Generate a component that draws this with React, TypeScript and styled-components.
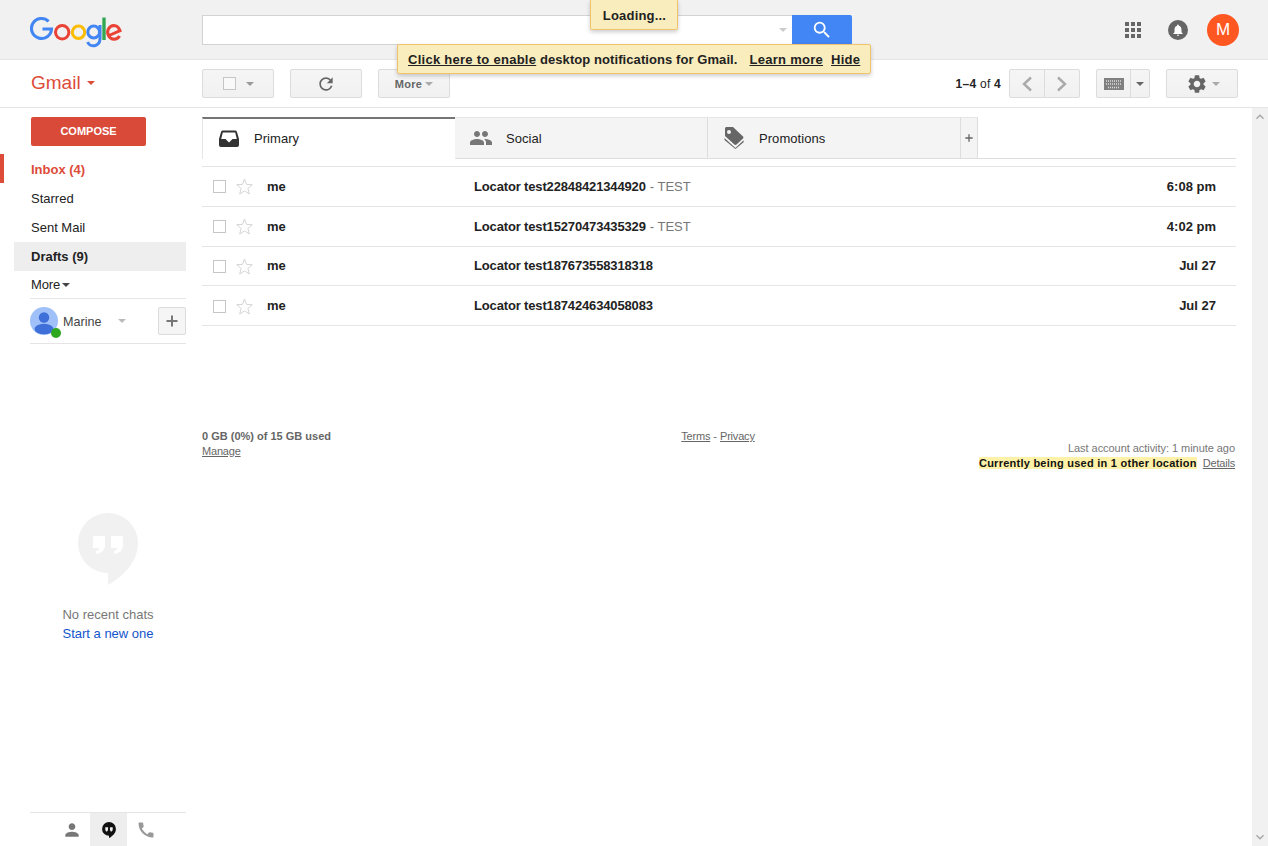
import styled, { createGlobalStyle } from 'styled-components';
import { MdApps, MdCall, MdKeyboardArrowDown, MdKeyboardArrowUp, MdNotifications, MdPeople, MdPerson, MdRefresh, MdSearch, MdSettings } from 'react-icons/md';

const Global = createGlobalStyle`
  html, body { margin: 0; padding: 0; height: 100%; overflow: hidden; background: #fff; }
  body { font-family: "Liberation Sans", Arial, sans-serif; font-size: 13px; color: #222; }
  * { box-sizing: border-box; }
`;

const Page = styled.div`
  position: relative;
  display: flex;
  flex-direction: column;
  width: 1268px;
  height: 846px;
  overflow: hidden;
`;

const Header = styled.header`
  display: flex;
  align-items: center;
  height: 60px;
  background: #f1f1f1;
  border-bottom: 1px solid #e5e5e5;
`;

const LogoBox = styled.div`
  display: flex;
  width: 202px;
  padding: 3px 0 0 30px;
`;

const SearchBox = styled.div`
  display: flex;
  justify-content: flex-end;
  align-items: center;
  width: 590px;
  height: 30px;
  padding-right: 5px;
  background: #fff;
  border: 1px solid #d3d3d3;
  border-right: 0;
`;

const SearchButton = styled.div`
  display: flex;
  align-items: center;
  justify-content: center;
  width: 60px;
  height: 30px;
  background: #4285f4;
  border-radius: 0 2px 2px 0;
  color: #fff;
  font-size: 22px;
`;

const Caret = styled.span<{ $color?: string; $size?: number }>`
  display: inline-block;
  width: 0;
  height: 0;
  border-style: solid;
  border-width: ${p => p.$size ?? 4}px ${p => p.$size ?? 4}px 0;
  border-color: ${p => p.$color ?? '#888'} transparent transparent;
`;

const HeaderRight = styled.div`
  display: flex;
  align-items: center;
  margin-left: auto;
  padding-right: 29px;
`;

const AppsSlot = styled.div`
  display: flex;
  color: #666;
  font-size: 24px;
  margin-right: 23px;
`;

const BellCircle = styled.div`
  display: flex;
  align-items: center;
  justify-content: center;
  width: 20px;
  height: 20px;
  margin-right: 19px;
  border-radius: 50%;
  background: #666;
  color: #fff;
  font-size: 14px;
`;

const Avatar = styled.div`
  display: flex;
  align-items: center;
  justify-content: center;
  width: 32px;
  height: 32px;
  border-radius: 50%;
  background: #ff5722;
  color: #fff;
  font-size: 17px;
`;

const Toolbar = styled.div`
  display: flex;
  align-items: center;
  height: 48px;
  border-bottom: 1px solid #e5e5e5;
  padding-right: 30px;
`;

const GmailLabel = styled.div`
  display: flex;
  align-items: center;
  gap: 6px;
  width: 202px;
  padding: 0 0 1px 31px;
  font-size: 19px;
  color: #dd4b39;
`;

const ToolGroup = styled.div`
  display: flex;
  gap: 16px;
`;

const ToolButton = styled.div<{ $icon?: boolean }>`
  display: flex;
  align-items: center;
  justify-content: center;
  gap: 3px;
  width: 72px;
  height: 29px;
  background: linear-gradient(#f5f5f5, #f1f1f1);
  border: 1px solid #dcdcdc;
  border-radius: 2px;
  color: #666;
  font-size: ${p => (p.$icon ? '20px' : '11px')};
  font-weight: bold;
  letter-spacing: 0.3px;
`;

const BoxMark = styled.span`
  width: 13px;
  height: 13px;
  margin-right: 7px;
  background: #f9f9f9;
  border: 1px solid #c6c6c6;
`;

const ToolRight = styled.div`
  display: flex;
  align-items: center;
  margin-left: auto;
`;

const PageCount = styled.div`
  margin-right: 8px;
  font-size: 12px;
  letter-spacing: 0.25px;
  color: #222;
  b { font-weight: bold; }
`;

const SplitButton = styled.div<{ $mr?: number }>`
  display: flex;
  height: 29px;
  margin-right: ${p => p.$mr ?? 0}px;
  background: linear-gradient(#f5f5f5, #f1f1f1);
  border: 1px solid #dcdcdc;
  border-radius: 2px;
`;

const SplitCell = styled.div<{ $w: number; $divide?: boolean; $gear?: boolean }>`
  display: flex;
  align-items: center;
  justify-content: center;
  gap: 4px;
  width: ${p => p.$w}px;
  padding-left: ${p => (p.$gear ? '2px' : '0')};
  border-left: ${p => (p.$divide ? '1px solid #dcdcdc' : '0')};
  color: #666;
  font-size: ${p => (p.$gear ? '22px' : '13px')};
`;

const Body = styled.div`
  flex: 1;
  display: flex;
  min-height: 0;
`;

const Sidebar = styled.aside`
  display: flex;
  flex-direction: column;
  width: 186px;
  margin-right: 16px;
  padding-top: 9px;
`;

const Compose = styled.div`
  display: flex;
  align-items: center;
  justify-content: center;
  width: 115px;
  height: 29px;
  margin: 0 0 8px 31px;
  padding-bottom: 1px;
  background: #d94a38;
  border-radius: 2px;
  color: #fff;
  font-size: 11px;
  font-weight: bold;
`;

const NavItem = styled.div<{ $active?: boolean; $strong?: boolean; $shade?: boolean }>`
  position: relative;
  display: flex;
  align-items: center;
  height: 29.33px;
  margin-left: 14px;
  padding: ${p => (p.$active ? '2px' : '0.6px')} 0 0 17px;
  background: ${p => (p.$shade ? '#eee' : 'transparent')};
  color: ${p => (p.$active ? '#dd4b39' : '#222')};
  font-weight: ${p => (p.$strong ? 'bold' : 'normal')};
  font-size: 13px;

  &::before {
    content: '';
    display: ${p => (p.$active ? 'block' : 'none')};
    position: absolute;
    left: -14px;
    top: 0;
    bottom: 0;
    width: 4px;
    background: #dd4b39;
  }
`;

const MoreItem = styled.div`
  display: flex;
  align-items: center;
  gap: 2px;
  height: 27px;
  margin-left: 31px;
  font-size: 13px;
  letter-spacing: -0.1px;
`;

const AccountRow = styled.div`
  display: flex;
  align-items: center;
  height: 46px;
  margin-left: 30px;
  border-top: 1px solid #e5e5e5;
  border-bottom: 1px solid #e5e5e5;
`;

const AccountAvatar = styled.div`
  position: relative;
  display: flex;
  flex: none;
  width: 28px;
  height: 28px;
  margin-right: 5px;
`;

const OnlineDot = styled.span`
  position: absolute;
  right: -3px;
  bottom: -3px;
  width: 10px;
  height: 10px;
  border-radius: 50%;
  background: #2fa71f;
`;

const AccountName = styled.span`
  width: 55px;
  padding-top: 1px;
  color: #444;
  font-size: 12.6px;
`;

const AddButton = styled.div`
  display: flex;
  align-items: center;
  justify-content: center;
  width: 28px;
  height: 28px;
  margin-left: auto;
  background: #f5f5f5;
  border: 1px solid #dcdcdc;
  border-radius: 2px;
`;

const ChatEmpty = styled.div`
  display: flex;
  flex-direction: column;
  align-items: center;
  margin: 169px 0 0 30px;
  font-size: 13px;
  color: #777;
  line-height: 19px;
`;

const ChatLink = styled.span`
  color: #15c;
`;

const Bubble = styled.svg`
  display: block;
  margin-bottom: 20px;
`;

const Dock = styled.div`
  display: flex;
  height: 34px;
  margin: auto 0 0 30px;
  padding-left: 23px;
  border-top: 1px solid #e5e5e5;
`;

const DockItem = styled.div<{ $on?: boolean; $color?: string }>`
  display: flex;
  align-items: center;
  justify-content: center;
  width: 37px;
  background: ${p => (p.$on ? '#eee' : 'transparent')};
  color: ${p => p.$color ?? '#777'};
  font-size: 20px;
`;

const Main = styled.main`
  flex: 1;
  min-width: 0;
  margin-right: 16px;
  padding-top: 9px;
`;

const TabRow = styled.div`
  display: flex;
  height: 42px;
  margin-bottom: 7px;
`;

const Tab = styled.div<{ $on?: boolean }>`
  display: flex;
  align-items: center;
  width: 253px;
  padding-bottom: ${p => (p.$on ? '2px' : '0')};
  background: ${p => (p.$on ? '#fff' : '#f4f4f4')};
  border-top: ${p => (p.$on ? '2px solid #757575' : '1px solid #e5e5e5')};
  border-left: 1px solid ${p => (p.$on ? '#e5e5e5' : 'transparent')};
  border-right: ${p => (p.$on ? '0' : '1px solid #ddd')};
  border-bottom: ${p => (p.$on ? '0' : '1px solid #ddd')};
  font-size: 13px;
  letter-spacing: 0.05px;
`;

const TabIcon = styled.div<{ $w?: number }>`
  display: flex;
  justify-content: center;
  width: ${p => p.$w ?? 51}px;
  color: #777;
  font-size: 24px;
`;

const TabPlus = styled.div`
  display: flex;
  align-items: center;
  justify-content: center;
  width: 17px;
  background: #f4f4f4;
  border-top: 1px solid #e5e5e5;
  border-right: 1px solid #ddd;
  border-bottom: 1px solid #ddd;
`;

const TabFill = styled.div`
  flex: 1;
  border-bottom: 1px solid #ddd;
`;

const MailList = styled.div`
  border-top: 1px solid #e5e5e5;
`;

const MailRow = styled.div`
  display: flex;
  align-items: center;
  height: 39.75px;
  padding: 0 20px 0 11px;
  border-bottom: 1px solid #e5e5e5;
  font-size: 13px;
`;

const RowCheck = styled.span`
  flex: none;
  width: 13px;
  height: 13px;
  margin: 1px 10px 0 0;
  border: 1px solid #c6c6c6;
`;

const RowStar = styled.svg`
  flex: none;
  margin: 1px 14px 0 0;
`;

const Sender = styled.b`
  width: 207px;
  color: #222;
`;

const Subject = styled.b`
  color: #222;
  letter-spacing: -0.15px;
`;

const Snippet = styled.span`
  margin-left: 4px;
  color: #777;
`;

const RowDate = styled.b`
  margin-left: auto;
  color: #222;
`;

const Footer = styled.div`
  display: grid;
  grid-template-columns: 1fr 1fr 1fr;
  margin-top: 103px;
  font-size: 11px;
  line-height: 15px;
  color: #666;
`;

const FootCenter = styled.div`
  padding-right: 2px;
  text-align: center;
`;

const FootRight = styled.div`
  padding: 12px 1px 0 0;
  text-align: right;
  color: #777;
  letter-spacing: -0.05px;
`;

const FootLink = styled.span`
  text-decoration: underline;
  color: #666;
  letter-spacing: -0.2px;
`;

const Warning = styled.b`
  margin-right: 6px;
  background: #fff1a8;
  color: #111;
  letter-spacing: 0.25px;
`;

const Scrollbar = styled.div`
  display: flex;
  flex-direction: column;
  justify-content: space-between;
  align-items: center;
  width: 16px;
  background: #f1f1f1;
  color: #a6a6a6;
  font-size: 16px;
  padding: 1px 0;
`;

const Loading = styled.div`
  position: absolute;
  top: 0;
  left: 590px;
  width: 88px;
  height: 30px;
  display: flex;
  align-items: center;
  justify-content: center;
  padding: 1px 0 0 1px;
  background: #f9edbe;
  border: 1px solid #f0c36d;
  border-top: 0;
  border-radius: 0 0 2px 2px;
  box-shadow: 0 2px 4px rgba(0, 0, 0, 0.2);
  font-weight: bold;
  letter-spacing: 0.2px;
  color: #222;
`;

const Notice = styled.div`
  position: absolute;
  top: 44px;
  left: 397px;
  width: 474px;
  height: 30px;
  display: flex;
  align-items: center;
  padding-left: 10px;
  background: #f9edbe;
  border: 1px solid #f0c36d;
  border-radius: 2px;
  box-shadow: 0 2px 4px rgba(0, 0, 0, 0.2);
  font-weight: bold;
  letter-spacing: 0.08px;
  color: #222;
  white-space: pre;
`;

const NoticeLink = styled.span<{ $ml?: number }>`
  margin-left: ${p => p.$ml ?? 0}px;
  text-decoration: underline;
  letter-spacing: 0.27px;
`;

const GoogleLogo = () => (
  <svg width="92" height="33" viewBox="0 0 92 33" fill="none">
    <path d="M18.6 6.4 A10 10 0 1 0 21.5 14 H12.5" stroke="#4285f4" strokeWidth="3.1" />
    <circle cx="32.2" cy="17.2" r="6.7" stroke="#ea4335" strokeWidth="3" />
    <circle cx="48.5" cy="17.2" r="6.2" stroke="#fbbc05" strokeWidth="3" />
    <circle cx="63.7" cy="17" r="5.9" stroke="#4285f4" strokeWidth="3" />
    <path d="M70 10 V23.5 C70 32 60 33 57.6 27" stroke="#4285f4" strokeWidth="3" />
    <path d="M74 2.5 V25" stroke="#34a853" strokeWidth="3.4" />
    <path d="M79 20.5 L90 15.6 C88.5 11.6 85.5 10.4 83.8 10.4 A6.5 6.9 0 1 0 89.6 21" stroke="#ea4335" strokeWidth="3" />
  </svg>
);

const Star = () => (
  <RowStar width="17" height="17" viewBox="0 0 17 17">
    <polygon points="8.5,1 10.6,6.4 16.3,6.7 11.9,10.4 13.3,16 8.5,12.9 3.7,16 5.1,10.4 0.7,6.7 6.4,6.4" fill="#fff" stroke="#d5d5d5" />
  </RowStar>
);

const Chevron = ({ left }: { left?: boolean }) => (
  <svg width="12" height="16" viewBox="0 0 12 16" fill="none">
    <polyline points={left ? '10,1.5 3,8 10,14.5' : '2,1.5 9,8 2,14.5'} stroke="#aaa" strokeWidth="2.4" />
  </svg>
);

const KeyboardIcon = () => (
  <svg width="20" height="12" viewBox="0 0 20 12">
    <rect width="20" height="12" fill="#808080" />
    <path d="M2 3h16M2 6h16M4 9.5h12" stroke="#ddd" strokeWidth="1.4" strokeDasharray="1 1" />
  </svg>
);

const InboxIcon = () => (
  <svg width="20" height="17" viewBox="0 0 20 17">
    <path d="M4 0.5 H16 C17 0.5 17.6 1 18 2 L20 9 V15 C20 16.2 19.2 17 18 17 H2 C0.8 17 0 16.2 0 15 V9 L2 2 C2.4 1 3 0.5 4 0.5 Z M3.8 2.6 L2.2 9 H6.5 L10 12.4 L13.5 9 H17.8 L16.2 2.6 Z" fill="#333" fillRule="evenodd" />
  </svg>
);

const TagIcon = () => (
  <svg width="20" height="22" viewBox="0 0 20 22">
    <path d="M1 1.5 C1 .7 1.7 0 2.5 0 H9 L19 9.5 C19.6 10.2 19.6 11 19 11.6 L12.5 17.5 C11.8 18.1 11 18.1 10.4 17.5 L1 9 Z M5 3 A2 2 0 1 0 5 7 A2 2 0 1 0 5 3 Z" fill="#666" fillRule="evenodd" />
    <path d="M0.5 11 L11.4 21 L19.6 13.2 V15.2 L11.4 22 L0.5 13 Z" fill="#666" />
  </svg>
);

const PlusIcon = ({ size, color }: { size: number; color: string }) => (
  <svg width={size} height={size} viewBox="0 0 12 12">
    <path d="M6 0.5V11.5M0.5 6H11.5" stroke={color} strokeWidth="2" />
  </svg>
);

const PersonAvatar = () => (
  <svg width="28" height="28" viewBox="0 0 28 28">
    <circle cx="14" cy="14" r="14" fill="#9fc0f8" />
    <circle cx="14" cy="10.5" r="5.2" fill="#3f6fd8" />
    <ellipse cx="14" cy="22" rx="9.5" ry="5.2" fill="#3f6fd8" />
  </svg>
);

const mails = [
  { subject: 'Locator test22848421344920', snippet: '- TEST', date: '6:08 pm' },
  { subject: 'Locator test15270473435329', snippet: '- TEST', date: '4:02 pm' },
  { subject: 'Locator test187673558318318', snippet: '', date: 'Jul 27' },
  { subject: 'Locator test187424634058083', snippet: '', date: 'Jul 27' },
];

export default function App() {
  return (
    <Page>
      <Global />
      <Header>
        <LogoBox><GoogleLogo /></LogoBox>
        <SearchBox><Caret $color="#ccc" /></SearchBox>
        <SearchButton><MdSearch /></SearchButton>
        <HeaderRight>
          <AppsSlot><MdApps /></AppsSlot>
          <BellCircle><MdNotifications /></BellCircle>
          <Avatar>M</Avatar>
        </HeaderRight>
      </Header>

      <Toolbar>
        <GmailLabel>Gmail <Caret $color="#dd4b39" /></GmailLabel>
        <ToolGroup>
          <ToolButton><BoxMark /><Caret $color="#999" /></ToolButton>
          <ToolButton $icon><MdRefresh /></ToolButton>
          <ToolButton>More <Caret $color="#aaa" /></ToolButton>
        </ToolGroup>
        <ToolRight>
          <PageCount><b>1–4</b> of <b>4</b></PageCount>
          <SplitButton $mr={16}>
            <SplitCell $w={34}><Chevron left /></SplitCell>
            <SplitCell $w={35} $divide><Chevron /></SplitCell>
          </SplitButton>
          <SplitButton $mr={16}>
            <SplitCell $w={33}><KeyboardIcon /></SplitCell>
            <SplitCell $w={19} $divide><Caret $color="#666" /></SplitCell>
          </SplitButton>
          <SplitButton>
            <SplitCell $w={70} $gear><MdSettings /><Caret $color="#aaa" /></SplitCell>
          </SplitButton>
        </ToolRight>
      </Toolbar>

      <Body>
        <Sidebar>
          <Compose>COMPOSE</Compose>
          <NavItem $active $strong>Inbox (4)</NavItem>
          <NavItem>Starred</NavItem>
          <NavItem>Sent Mail</NavItem>
          <NavItem $strong $shade>Drafts (9)</NavItem>
          <MoreItem>More <Caret $color="#444" /></MoreItem>
          <AccountRow>
            <AccountAvatar><PersonAvatar /><OnlineDot /></AccountAvatar>
            <AccountName>Marine</AccountName>
            <Caret $color="#bbb" />
            <AddButton><PlusIcon size={12} color="#777" /></AddButton>
          </AccountRow>
          <ChatEmpty>
            <Bubble width="60" height="72" viewBox="0 0 60 72">
              <path d="M30 0a30 30 0 0 0 0 60v12c16-9 30-24 30-42A30 30 0 0 0 30 0z" fill="#f1f1f1" />
              <path d="M15 23h12v9c0 5-4 9-9 9v-3c2 0 3-1 3-3h-6z M33 23h12v9c0 5-4 9-9 9v-3c2 0 3-1 3-3h-6z" fill="#fff" />
            </Bubble>
            <span>No recent chats</span>
            <ChatLink>Start a new one</ChatLink>
          </ChatEmpty>
          <Dock>
            <DockItem><MdPerson /></DockItem>
            <DockItem $on>
              <svg width="14" height="16" viewBox="0 0 13 15">
                <path d="M6.5 0a6.5 6.5 0 0 0 0 13v2c3-1.500 6.500-4.500 6.500-8.500A6.500 6.500 0 0 0 6.500 0z" fill="#111" />
                <path d="M3 5h2.600v1.800c0 1.300-.8 2.200-2 2.200V8H3z M7.400 5H10v1.800c0 1.300-.8 2.200-2 2.200V8H7.400z" fill="#eee" />
              </svg>
            </DockItem>
            <DockItem $color="#999"><MdCall /></DockItem>
          </Dock>
        </Sidebar>

        <Main>
          <TabRow>
            <Tab $on>
              <TabIcon><InboxIcon /></TabIcon>
              Primary
            </Tab>
            <Tab>
              <TabIcon $w={50}><MdPeople /></TabIcon>
              Social
            </Tab>
            <Tab>
              <TabIcon $w={50}><TagIcon /></TabIcon>
              Promotions
            </Tab>
            <TabPlus><PlusIcon size={8} color="#666" /></TabPlus>
            <TabFill />
          </TabRow>

          <MailList>
            {mails.map(m => (
              <MailRow key={m.subject}>
                <RowCheck />
                <Star />
                <Sender>me</Sender>
                <Subject>{m.subject}</Subject>
                {m.snippet && <Snippet>{m.snippet}</Snippet>}
                <RowDate>{m.date}</RowDate>
              </MailRow>
            ))}
          </MailList>

          <Footer>
            <div>
              <b>0 GB (0%) of 15 GB used</b>
              <br />
              <FootLink>Manage</FootLink>
            </div>
            <FootCenter><FootLink>Terms</FootLink> - <FootLink>Privacy</FootLink></FootCenter>
            <FootRight>
              Last account activity: 1 minute ago
              <br />
              <Warning>Currently being used in 1 other location</Warning>
              <FootLink>Details</FootLink>
            </FootRight>
          </Footer>
        </Main>

        <Scrollbar>
          <MdKeyboardArrowUp />
          <MdKeyboardArrowDown />
        </Scrollbar>
      </Body>

      <Loading>Loading...</Loading>
      <Notice>
        <NoticeLink>Click here to enable</NoticeLink>{' desktop notifications for Gmail.'}
        <NoticeLink $ml={12}>Learn more</NoticeLink>
        <NoticeLink $ml={8}>Hide</NoticeLink>
      </Notice>
    </Page>
  );
}
